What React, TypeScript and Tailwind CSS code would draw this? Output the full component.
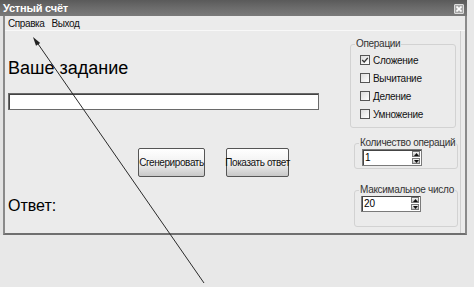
import React from "react";

const font = { fontFamily: '"Liberation Sans", Arial, sans-serif' };

function Spin({ value }: { value: string }) {
  return (
    <div className="flex h-[17px] w-[60px] border border-[#7a7a7a] bg-white shadow-[inset_1px_1px_0_#444]">
      <div className="flex-1 pl-[2px] text-[10px] leading-[15px] text-black">{value}</div>
      <div className="mr-[1px] flex w-[8px] flex-col gap-[1px] py-[1px]">
        <div className="flex flex-1 items-center justify-center border border-[#777] bg-gradient-to-b from-[#f4f4f4] to-[#bdbdbd]">
          <svg width="5" height="3" viewBox="0 0 5 3"><path d="M0 3 L2.5 0 L5 3 Z" fill="#111" /></svg>
        </div>
        <div className="flex flex-1 items-center justify-center border border-[#777] bg-gradient-to-b from-[#f4f4f4] to-[#bdbdbd]">
          <svg width="5" height="3" viewBox="0 0 5 3"><path d="M0 0 L2.5 3 L5 0 Z" fill="#111" /></svg>
        </div>
      </div>
    </div>
  );
}

function Check({ label, checked }: { label: string; checked?: boolean }) {
  return (
    <div className="flex h-[18px] items-center gap-[3px]">
      <div className="flex h-[10px] w-[10px] items-center justify-center border border-[#555] bg-gradient-to-br from-[#dcdcdc] to-white">
        {checked && (
          <svg width="8" height="8" viewBox="0 0 8 8"><path d="M1.2 4 L3.2 6 L6.8 1.8" stroke="#333" strokeWidth="1.3" fill="none" /></svg>
        )}
      </div>
      <span className="whitespace-nowrap text-[10px] tracking-[-0.3px] text-[#111]">{label}</span>
    </div>
  );
}

function Group({ title, children, className }: { title: string; children: React.ReactNode; className?: string }) {
  return (
    <div className={"relative rounded-[3px] border border-[#d2d2d2] " + (className ?? "")}>
      <span className="absolute left-[4px] top-[-7px] whitespace-nowrap bg-[#ebebeb] px-[1px] text-[10px] leading-[12px] tracking-[-0.3px] text-[#333]">{title}</span>
      {children}
    </div>
  );
}

function Button({ label, className }: { label: string; className?: string }) {
  return (
    <div className={"flex h-[29px] items-center justify-center whitespace-nowrap rounded-[2px] border border-[#555] bg-gradient-to-b from-white via-[#f2f2f2] to-[#c8c8c8] text-[10px] tracking-[-0.4px] text-[#111] " + (className ?? "")}>
      {label}
    </div>
  );
}

export default function App() {
  return (
    <div className="relative h-[287px] w-[474px] overflow-hidden bg-[#e8e8e8]" style={font}>
      <div className="flex h-[235px] w-[467px] flex-col bg-[#e3e3e3]">
        {/* title bar */}
        <div className="flex h-[16px] items-center justify-between bg-gradient-to-b from-[#5a5a5a] via-[#6c6c6c] to-[#7a7a7a] pl-[3px] pr-[3px]">
          <span className="text-[11px] font-bold leading-none tracking-[-0.2px] text-white">Устный счёт</span>
          <div className="mt-[2px] flex h-[10px] w-[10px] items-center justify-center rounded-[1px] border border-[#ddd] bg-[#a8a8a8]">
            <svg width="6" height="6" viewBox="0 0 6 6"><path d="M0.5 0.5 L5.5 5.5 M5.5 0.5 L0.5 5.5" stroke="white" strokeWidth="1.6" /></svg>
          </div>
        </div>
        {/* body with frame */}
        <div className="flex flex-1 flex-col pl-[3px]">
          <div className="flex flex-1 flex-col border-b-2 border-l-2 border-r-2 border-b-[#6f6f6f] border-l-[#8a8a8a] border-r-[#8a8a8a] bg-[#ebebeb]">
            {/* menu */}
            <div className="flex h-[15px] items-center gap-[7px] border-b border-b-[#f8f8f8] pl-[3px] text-[10px] tracking-[-0.4px] text-[#111]">
              <span>Справка</span>
              <span>Выход</span>
            </div>
            <div className="flex flex-1">
              {/* left */}
              <div className="flex w-[345px] flex-col pl-[3px]">
                <div className="mt-[27px] text-[18px] leading-[20px] text-black">Ваше задание</div>
                <div className="mt-[15px] h-[17px] w-[311px] border border-[#6a6a6a] bg-white shadow-[inset_1px_1px_0_#444]"></div>
                <div className="mt-[38px] flex">
                  <Button label="Сгенерировать" className="ml-[130px] w-[67px]" />
                  <Button label="Показать ответ" className="ml-[21px] w-[63px]" />
                </div>
                <div className="mt-[20px] text-[16px] leading-[18px] text-black">Ответ:</div>
              </div>
              {/* right */}
              <div className="flex w-[106px] flex-col">
                <Group title="Операции" className="mt-[13px] h-[84px] w-[106px]">
                  <div className="flex flex-col pl-[9px] pt-[6px]">
                    <Check label="Сложение" checked />
                    <Check label="Вычитание" />
                    <Check label="Деление" />
                    <Check label="Умножение" />
                  </div>
                </Group>
                <Group title="Количество операций" className="ml-[4px] mt-[15px] h-[26px] w-[104px]">
                  <div className="pl-[7px] pt-[5px]"><Spin value="1" /></div>
                </Group>
                <Group title="Максимальное число" className="ml-[4px] mt-[21px] h-[37px] w-[104px]">
                  <div className="pl-[6px] pt-[4px]"><Spin value="20" /></div>
                </Group>
              </div>
              <div className="ml-[4px] w-px self-stretch bg-[#cfcfcf]"></div>
            </div>
          </div>
        </div>
      </div>
      {/* annotation arrow */}
      <svg className="pointer-events-none absolute left-0 top-0" width="474" height="287" viewBox="0 0 474 287">
        <line x1="204" y1="283" x2="36" y2="41" stroke="#2a2a2a" strokeWidth="1" />
        <path d="M33 37 L40.2 43 L36 45.8 Z" fill="#222" />
      </svg>
    </div>
  );
}
